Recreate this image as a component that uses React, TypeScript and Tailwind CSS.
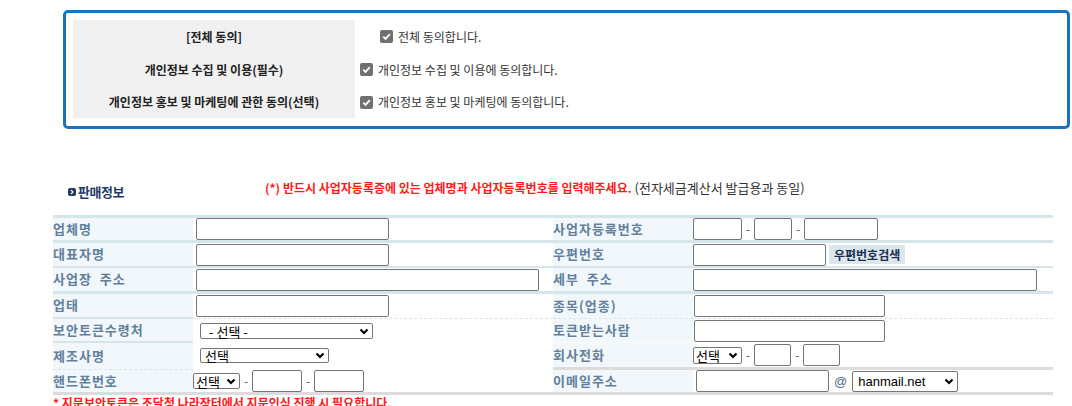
import React from "react"

const labelCls =
  "w-[140px] shrink-0 bg-[#f1f7fb] flex items-center pb-[2px] text-[13px] font-bold tracking-[1px] text-[#62809b] leading-none whitespace-pre"
const inputCls = "h-[22px] border border-[#767676] rounded-[2px] bg-white outline-none"

function Check() {
  return (
    <span className="inline-flex w-[13px] h-[13px] rounded-[2px] bg-[#707070] items-center justify-center shrink-0">
      <svg width="11" height="11" viewBox="0 0 12 12">
        <polyline points="2.5,6.2 5,8.6 9.6,3.4" fill="none" stroke="white" strokeWidth="2" />
      </svg>
    </span>
  )
}

function FakeSelect({ label, w, h = 16, pl = 4, text = "text-[13px]" }: { label: string; w: number; h?: number; pl?: number; text?: string }) {
  return (
    <div
      className={`flex items-center justify-between bg-white border border-[#767676] rounded-[2px] ${text} text-black leading-none pr-[3px]`}
      style={{ width: w, height: h, paddingLeft: pl }}
    >
      <span className="whitespace-pre">{label}</span>
      <svg width="10" height="7" viewBox="0 0 10 7">
        <polyline points="1.5,1.5 5,5 8.5,1.5" fill="none" stroke="black" strokeWidth="2.2" />
      </svg>
    </div>
  )
}

function Dash() {
  return <span className="text-[12px] text-[#555] px-[4px] leading-none">-</span>
}

const consentRows = [
  { label: "[전체 동의]", text: "전체 동의합니다.", pl: "pl-[25px]", h: "h-[33px]" },
  { label: "개인정보 수집 및 이용(필수)", text: "개인정보 수집 및 이용에 동의합니다.", pl: "pl-[5px]", h: "h-[33px]" },
  { label: "개인정보 홍보 및 마케팅에 관한 동의(선택)", text: "개인정보 홍보 및 마케팅에 동의합니다.", pl: "pl-[5px]", h: "h-[32px]" },
]

export default function App() {
  return (
    <div className="w-[1072px] h-[406px] overflow-hidden bg-white font-['Noto_Sans_CJK_KR','Malgun_Gothic',sans-serif]">
      {/* 동의 박스 */}
      <div className="ml-[63px] mt-[10px] w-[1007px] h-[119px] border-[3px] border-[#1a73b8] rounded-[5px] p-[7px]">
        {consentRows.map((r) => (
          <div key={r.label} className={`flex ${r.h}`}>
            <div className="w-[282px] bg-[#f0f0f0] flex items-center justify-center text-[12px] font-bold text-[#222]">
              {r.label}
            </div>
            <div className={`flex items-center gap-[5px] ${r.pl} text-[12px] text-[#333]`}>
              <Check />
              <span>{r.text}</span>
            </div>
          </div>
        ))}
      </div>

      {/* 판매정보 헤더 */}
      <div className="mt-[54px] ml-[68px] flex items-start h-[20px]">
        <div className="w-[197px] flex items-center gap-[2px] mt-[2px]">
          <span className="w-[8px] h-[8px] rounded-[2px] bg-[#1f3a66] flex items-center justify-center">
            <svg width="6" height="6" viewBox="0 0 6 6">
              <polyline points="2,1 4,3 2,5" fill="none" stroke="white" strokeWidth="1.2" />
            </svg>
          </span>
          <span className="text-[13px] font-bold text-[#1f3a66] leading-none tracking-[-0.5px]">판매정보</span>
        </div>
        <div className="text-[12px] leading-none mt-[-2px]">
          <span className="font-bold text-[#ff1a1a]">(*) 반드시 사업자등록증에 있는 업체명과 사업자등록번호를 입력해주세요.</span>
          <span className="text-[13px] text-[#333]"> (전자세금계산서 발급용과 동일)</span>
        </div>
      </div>

      {/* 판매정보 테이블 */}
      <div className="mt-[12px] ml-[53px] w-[1000px] border-t-[3px] border-[#d6e5e9]">
        {/* 업체명 / 사업자등록번호 */}
        <div className="flex h-[25px] border-b-[3px] border-[#d6e5e9]">
          <div className={labelCls}>업체명</div>
          <div className="w-[360px] flex items-center pl-[3px]">
            <input className={`${inputCls} w-[193px]`} />
          </div>
          <div className={labelCls}>사업자등록번호</div>
          <div className="w-[360px] flex items-center">
            <input className={`${inputCls} w-[49px]`} />
            <Dash />
            <input className={`${inputCls} w-[38px]`} />
            <Dash />
            <input className={`${inputCls} w-[74px]`} />
          </div>
        </div>

        {/* 대표자명 / 우편번호 */}
        <div className="flex h-[25px] border-b-2 border-[#d6e5e9]">
          <div className={labelCls}>대표자명</div>
          <div className="w-[360px] flex items-center pl-[3px]">
            <input className={`${inputCls} w-[193px]`} />
          </div>
          <div className={labelCls}>우편번호</div>
          <div className="w-[360px] flex items-center gap-[3px]">
            <input className={`${inputCls} w-[133px]`} />
            <button className="h-[19px] px-[5px] bg-[#dbe7ea] text-[12px] font-bold text-[#1b2f55] leading-none">
              우편번호검색
            </button>
          </div>
        </div>

        {/* 사업장 주소 / 세부 주소 */}
        <div className="flex h-[26px] border-b-[3px] border-[#d6e5e9]">
          <div className={labelCls}>{"사업장  주소"}</div>
          <div className="w-[360px] flex items-center pl-[3px]">
            <input className={`${inputCls} w-[343px]`} />
          </div>
          <div className={labelCls}>{"세부  주소"}</div>
          <div className="w-[360px] flex items-center">
            <input className={`${inputCls} w-[344px]`} />
          </div>
        </div>

        {/* 업태 / 종목 */}
        <div className="flex h-[25px]">
          <div className={`${labelCls} border-b-2 border-[#d6e5e9]`}>업태</div>
          <div className="w-[360px] flex items-center pl-[3px] border-b border-dashed border-[#dce6ea]">
            <input className={`${inputCls} w-[193px]`} />
          </div>
          <div className={`${labelCls} border-b border-dashed border-[#dce6ea]`}>종목(업종)</div>
          <div className="w-[360px] flex items-center pl-[1px] border-b border-dashed border-[#dce6ea]">
            <input className={`${inputCls} w-[191px]`} />
          </div>
        </div>

        {/* 보안토큰수령처 / 토큰받는사람 */}
        <div className="flex h-[24px]">
          <div className={`${labelCls} border-b-2 border-[#d6e5e9]`}>보안토큰수령처</div>
          <div className="w-[360px] flex items-center pl-[7px]">
            <FakeSelect label="- 선택 -" w={173} pl={8} />
          </div>
          <div className={`${labelCls} border-b border-dashed border-[#ffffff]`}>토큰받는사람</div>
          <div className="w-[360px] flex items-center pl-[1px]">
            <input className={`${inputCls} w-[191px]`} />
          </div>
        </div>

        {/* 제조사명 / 회사전화 */}
        <div className="flex h-[27px]">
          <div className={`${labelCls} border-b border-dashed border-[#d6e5e9]`}>제조사명</div>
          <div className="w-[360px] flex items-center pl-[7px] pb-[3px]">
            <FakeSelect label="선택" w={129} h={15} />
          </div>
          <div className={`${labelCls} border-b-[3px] border-[#dcdcdc]`}>회사전화</div>
          <div className="w-[360px] flex items-center border-b-[3px] border-[#dcdcdc]">
            <FakeSelect label="선택" w={49} h={17} pl={2} />
            <Dash />
            <input className={`${inputCls} w-[37px]`} />
            <Dash />
            <input className={`${inputCls} w-[37px]`} />
          </div>
        </div>

        {/* 핸드폰번호 / 이메일주소 */}
        <div className="flex h-[25px] border-b-[3px] border-[#dcdcdc]">
          <div className={labelCls}>핸드폰번호</div>
          <div className="w-[360px] flex items-center">
            <FakeSelect label="선택" w={47} h={16} pl={2} />
            <Dash />
            <input className={`${inputCls} w-[50px]`} />
            <Dash />
            <input className={`${inputCls} w-[50px]`} />
          </div>
          <div className={labelCls}>이메일주소</div>
          <div className="w-[360px] flex items-center pl-[3px]">
            <input className={`${inputCls} w-[133px]`} />
            <span className="px-[5px] text-[13px] text-[#4a6b8a] font-['Liberation_Sans',sans-serif] leading-none">@</span>
            <FakeSelect label="hanmail.net" w={106} h={21} pl={5} text="text-[13px] font-['Liberation_Sans',sans-serif]" />
          </div>
        </div>

        <div className="mt-[2px] text-[12px] font-bold text-[#ff1a1a] leading-none">
          * 지문보안토큰은 조달청 나라장터에서 지문인식 진행 시 필요합니다.
        </div>
      </div>
    </div>
  )
}
